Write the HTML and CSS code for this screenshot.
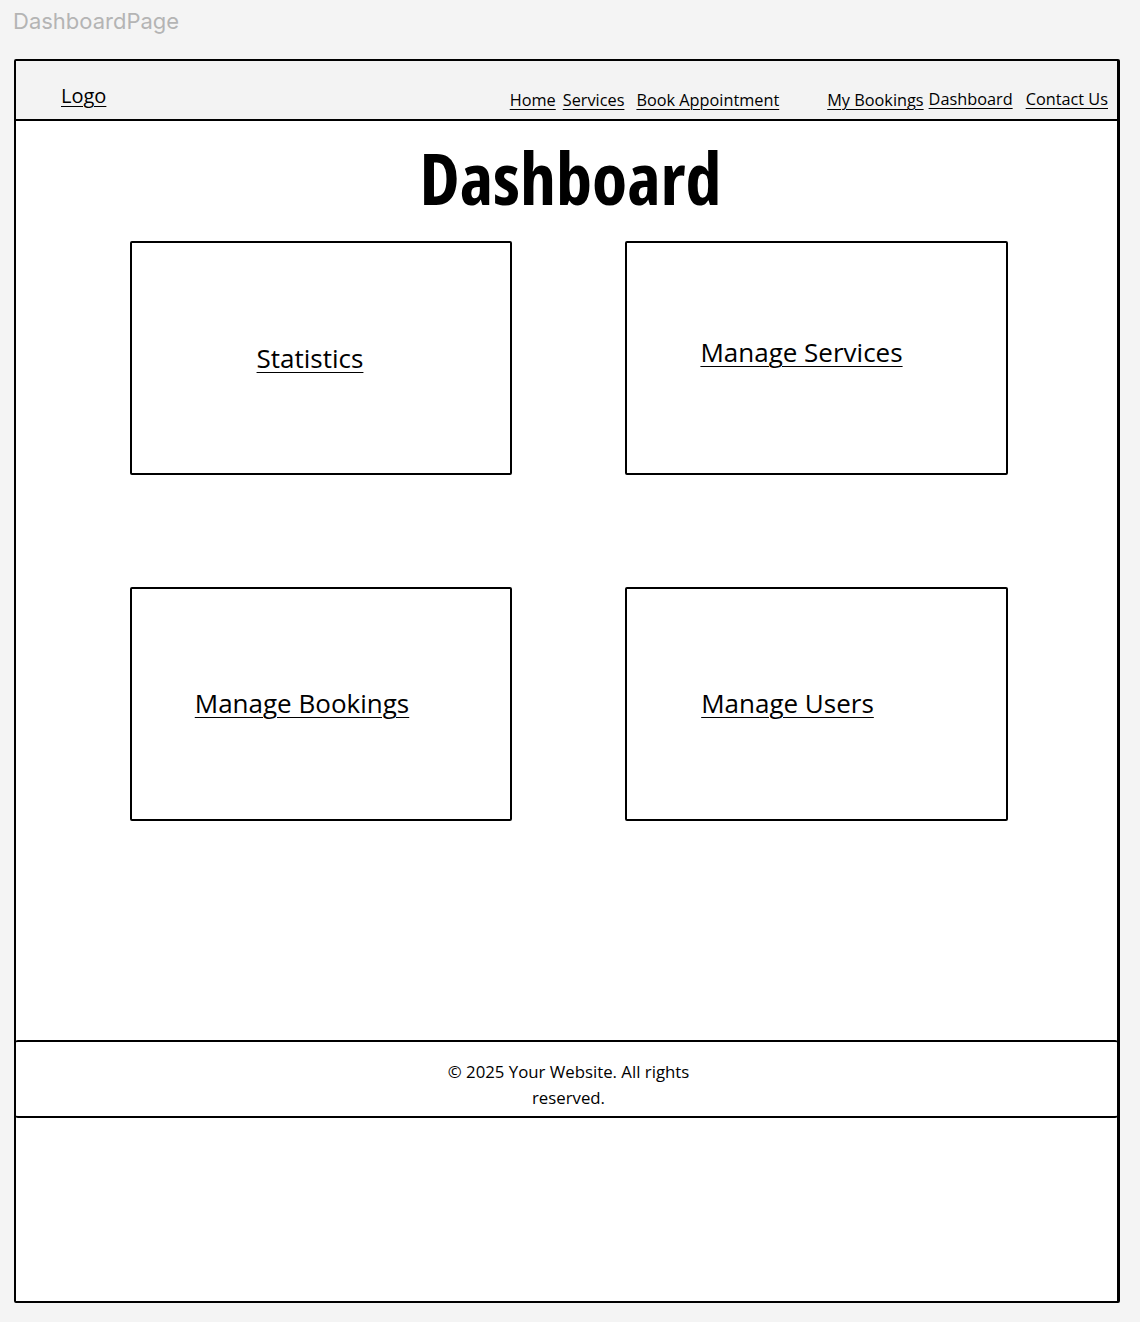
FILE: index.html
```html
<!DOCTYPE html>
<html lang="en">
<head>
<meta charset="utf-8">
<title>DashboardPage</title>
<link rel="stylesheet" href="styles.css">
</head>
<body>
<div class="page-label">DashboardPage</div>
<div class="frame">
  <header class="header">
    <a class="logo" href="#">Logo</a>
    <nav class="nav">
      <a class="nav-link nav-home" href="#">Home</a>
      <a class="nav-link nav-services" href="#">Services</a>
      <a class="nav-link nav-book" href="#">Book Appointment</a>
      <a class="nav-link nav-my" href="#">My Bookings</a>
      <a class="nav-link nav-dash" href="#">Dashboard</a>
      <a class="nav-link nav-contact" href="#">Contact Us</a>
    </nav>
  </header>
  <main class="main">
    <h1 class="title">Dashboard</h1>
    <div class="cards">
      <div class="card card-stats"><a class="card-link" href="#">Statistics</a></div>
      <div class="card card-services"><a class="card-link" href="#">Manage Services</a></div>
      <div class="card card-bookings"><a class="card-link" href="#">Manage Bookings</a></div>
      <div class="card card-users"><a class="card-link" href="#">Manage Users</a></div>
    </div>
  </main>
  <footer class="footer">
    <p class="copy">© 2025 Your Website. All rights<br>reserved.</p>
  </footer>
</div>
</body>
</html>
```
FILE: styles.css
```css
* { box-sizing: border-box; }

html, body {
  margin: 0;
  padding: 0;
  background: #f4f4f4;
}

body {
  font-family: "Open Sans", "Noto Sans", sans-serif;
  color: #000;
}

.page-label {
  font-family: Inter, "Noto Sans", sans-serif;
  font-size: 22px;
  line-height: 24px;
  color: #b4b4b4;
  padding: 9px 0 0 13px;
  height: 59px;
}

.frame {
  margin-left: 14px;
  width: 1106px;
  height: 1244px;
  border: 2px solid #000;
  border-right-width: 3px;
  border-radius: 2px;
  background: #fff;
}

.header {
  height: 60px;
  background: #f3f3f3;
  border-bottom: 2px solid #000;
  display: flex;
  align-items: flex-start;
  padding: 0 9px 0 45px;
}

.logo {
  font-size: 20px;
  line-height: 24px;
  margin-top: 23px;
  color: #000;
  text-decoration: underline;
  text-decoration-thickness: 1px;
  text-underline-offset: 3px;
}

.nav {
  margin-left: auto;
  display: flex;
  margin-top: 29px;
}

.nav-link {
  font-size: 16.3px;
  line-height: 20px;
  color: #000;
  text-decoration: underline;
  text-decoration-thickness: 1px;
  text-underline-offset: 3px;
  white-space: nowrap;
}

.nav-services { margin-left: 7px; }
.nav-book { margin-left: 12px; }
.nav-my { margin-left: 48px; }
.nav-dash { margin-left: 5px; margin-top: -1px; }
.nav-contact { margin-left: 13px; margin-top: -1px; }

.main {
  height: 919px;
  padding-top: 20px;
}

.title {
  margin: 0;
  font-family: "Open Sans", "Noto Sans", sans-serif;
  font-stretch: 75%;
  font-weight: 700;
  font-size: 72px;
  line-height: 72px;
  text-align: center;
  padding-left: 8px;
}

.cards {
  margin-top: 28px;
  margin-left: 114px;
  display: grid;
  grid-template-columns: 382px 383px;
  grid-template-rows: 234px 234px;
  column-gap: 113px;
  row-gap: 112px;
}

.card {
  border: 2px solid #000;
  border-radius: 2px;
  display: flex;
  align-items: center;
  justify-content: center;
}

.card-stats { padding-right: 22px; }
.card-services { padding-right: 30px; padding-bottom: 12px; }
.card-bookings { padding-right: 38px; padding-bottom: 3px; }
.card-users { padding-right: 58px; padding-bottom: 3px; }

.card-link {
  font-size: 26px;
  line-height: 32px;
  color: #000;
  text-decoration: underline;
  text-decoration-thickness: 1px;
  text-underline-offset: 4px;
}

.footer {
  height: 78px;
  border-top: 2px solid #000;
  border-bottom: 2px solid #000;
  margin: 0 -1px;
  border-radius: 3px;
  padding-top: 17px;
}

.copy {
  margin: 0;
  text-align: center;
  font-size: 16.8px;
  line-height: 26px;
  padding-left: 4px;
}
```
